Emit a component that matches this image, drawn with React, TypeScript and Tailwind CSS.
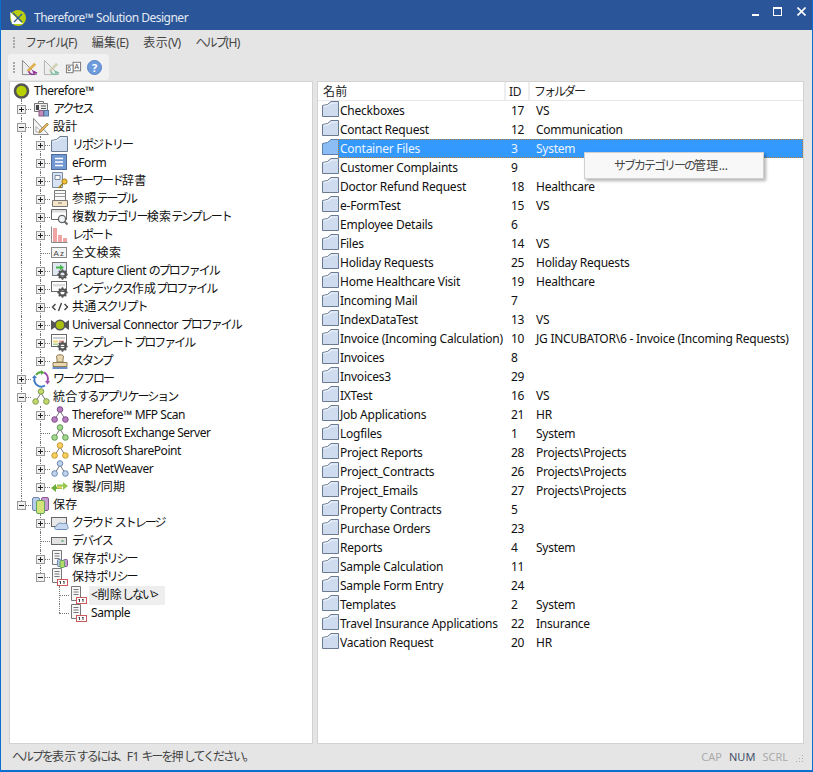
import React from "react";

const FONT = '"Noto Sans", "Noto Sans CJK JP", sans-serif';

/* Splits a label into kana, kanji and latin runs: the reference face has narrow kana. */
const T = ({ s, lat = "tracking-[-0.45px]" }: { s: string; lat?: string }) => {
  const parts = s.match(/[\u3040-\u30ff、。]+|[\u4e00-\u9fff]+|[^\u3040-\u30ff、。\u4e00-\u9fff]+/g) || [];
  return (
    <>
      {parts.map((p, i) =>
        /^[\u3040-\u30ff、。]/.test(p) ? (
          <span key={i} className="tracking-[-2px]">{p}</span>
        ) : /^[\u4e00-\u9fff]/.test(p) ? (
          <span key={i} className="tracking-[0.3px]">{p}</span>
        ) : (
          <span key={i} className={lat}>{p}</span>
        )
      )}
    </>
  );
};

const Gear = ({ x = 10, y = 11 }: { x?: number; y?: number }) => (
  <g transform={`translate(${x} ${y})`}>
    <circle r="3.2" fill="none" stroke="#555" strokeWidth="2.2" />
    <path d="M0-5.2V-3.5M0 3.5V5.2M-5.2 0H-3.5M3.5 0H5.2M-3.7-3.7L-2.5-2.5M2.5 2.5L3.7 3.7M-3.7 3.7L-2.5 2.5M2.5-2.5L3.7-3.7" stroke="#555" strokeWidth="1.6" />
  </g>
);

const Net = ({ fill, stroke }: { fill: string; stroke: string }) => (
  <>
    <path d="M9 5L4 13M9 5L14 13" stroke="#777" fill="none" />
    <circle cx="9" cy="3.5" r="2.8" fill={fill} stroke={stroke} />
    <circle cx="3.6" cy="13.5" r="2.8" fill={fill} stroke={stroke} />
    <circle cx="14.4" cy="13.5" r="2.8" fill={fill} stroke={stroke} />
  </>
);

const Doc = () => (
  <path d="M1.5.5H10.5V14.5H1.5ZM3.5 3.5H8.5M3.5 6H8.5M3.5 8.5H8.5" fill="#f7f7f7" stroke="#777" />
);

const icons: Record<string, React.ReactNode> = {
  root: <circle cx="8.5" cy="9" r="6.5" fill="#b8cf00" stroke="#555" strokeWidth="2.6" />,
  access: (
    <>
      <path d="M2.5 3.5H15.5V11.5H2.5Z" fill="#eee" stroke="#777" />
      <path d="M6.5 1.5H11.5V3.5H6.5Z" fill="#fff" stroke="#777" />
      <rect x="4" y="5" width="3" height="5" fill="#444" />
      <path d="M9 6H14M9 8.5H14" stroke="#555" />
      <rect x="7" y="10.5" width="4.5" height="5.5" fill="#c58bb8" stroke="#8a5b80" />
      <rect x="12" y="10.5" width="4.5" height="5.5" fill="#7fa6d6" stroke="#5878a0" />
    </>
  ),
  design: (
    <>
      <path d="M1.5 .5V16.5H16.5Z" fill="#f4f4f4" stroke="#888" />
      <path d="M4 8.5V14H9.5Z" fill="#fff" stroke="#aaa" />
      <path d="M7.5 12.5L15 5L16.5 6.5L9 14L7 15Z" fill="#e2b35a" stroke="#8a6a2a" strokeWidth=".6" />
    </>
  ),
  folder: (
    <>
      <path d="M.5 4.5L5.5 3.5L9 .5H16.5V15.5H.5Z" fill="#cfdcef" stroke="#6a7a90" />
      <path d="M1.5 5L6 4L9.5 1.5H15.5V2.5H10L6.5 5L1.5 6Z" fill="#eef3fa" />
    </>
  ),
  eform: (
    <>
      <rect x=".5" y=".5" width="15" height="15" fill="#7298d2" stroke="#4e6c9c" />
      <path d="M4 4.5H12M4 8H12M4 11.5H12" stroke="#fff" strokeWidth="1.6" />
    </>
  ),
  keyword: (
    <>
      <path d="M1.5 .5H11.5V15.5H1.5Z" fill="#d7e3f3" stroke="#7b8aa0" />
      <path d="M4 3.5H9V7.5H4Z" fill="#fff" stroke="#7b8aa0" />
      <circle cx="13.5" cy="9.5" r="2.6" fill="#f0c040" stroke="#a67f14" />
      <path d="M12 11.5L7.5 16M9 14.5L10.5 16" stroke="#a67f14" strokeWidth="1.4" />
    </>
  ),
  table: (
    <>
      <path d="M3.5 .5H14.5V10.5H3.5Z" fill="#fafafa" stroke="#777" />
      <path d="M3.5 3.5H14.5M3.5 6.5H14.5" stroke="#999" />
      <path d="M1.5 10.5H16.5V16.5H1.5Z" fill="#f4e6c6" stroke="#777" />
      <path d="M7 13H11" stroke="#a98" strokeWidth="1.5" />
    </>
  ),
  search: (
    <>
      <path d="M.5 1.5H15.5V11.5H.5Z" fill="#fff" stroke="#666" />
      <path d="M1 2H15V4.5H1Z" fill="#ddd" />
      <circle cx="11" cy="11" r="3.6" fill="#f2f5f8" stroke="#666" strokeWidth="1.3" />
      <path d="M13.5 13.5L16.5 16.5" stroke="#666" strokeWidth="2" />
    </>
  ),
  report: (
    <>
      <path d="M.5 .5V16.5H16.5" fill="none" stroke="#888" />
      <rect x="2" y="2" width="4" height="14" fill="#f0a5a5" />
      <rect x="7" y="9" width="4" height="7" fill="#f0a5a5" />
      <rect x="12" y="12" width="4" height="4" fill="#f0a5a5" />
    </>
  ),
  fulltext: (
    <>
      <rect x=".5" y="3.5" width="15" height="10" fill="#f4f4f4" stroke="#888" />
      <text x="2.5" y="11.5" fontSize="8" fill="#444" fontFamily="Liberation Sans">A</text>
      <text x="9" y="11.5" fontSize="8" fill="#444" fontFamily="Liberation Sans">z</text>
    </>
  ),
  capture: (
    <>
      <rect x="1.5" y=".5" width="14" height="13" fill="#dfe8f3" stroke="#777" />
      <path d="M5 4.5H9V2.5L13 5.5L9 8.5V6.5H5Z" fill="#47b54b" />
      <Gear x={11.5} y={12.5} />
    </>
  ),
  index: (
    <>
      <rect x=".5" y="1.5" width="15" height="10" fill="#fff" stroke="#666" />
      <path d="M2 4H14V6.5H2Z" fill="#ddd" />
      <Gear x={11.5} y={12.5} />
    </>
  ),
  script: <path d="M4.5 6L1.5 9L4.5 12M13.5 6L16.5 9L13.5 12M10.5 5L7.5 13" fill="none" stroke="#444" strokeWidth="1.4" />,
  universal: (
    <>
      <path d="M0 4L6 8V10L0 14ZM18 4L12 8V10L18 14Z" fill="#555" />
      <circle cx="9" cy="9" r="4.8" fill="#a9bf10" stroke="#555" strokeWidth="1.6" />
    </>
  ),
  template: (
    <>
      <rect x=".5" y=".5" width="15" height="12" fill="#fff" stroke="#666" />
      <path d="M2 3H14V5H2Z" fill="#ccc" />
      <path d="M2 6.5H7V8.5H2Z" fill="#f3d36a" />
      <path d="M8 6.5H13V8.5H8Z" fill="#ec9b8e" />
      <path d="M2 9.5H7V11H2Z" fill="#a8d08d" />
      <Gear x={11.5} y={12.5} />
    </>
  ),
  stamp: (
    <>
      <path d="M6 10C6 7 6 6.5 5.5 5C4.5 2 13.5 2 12.5 5C12 6.5 12 7 12 10Z" fill="#e8d7b0" stroke="#8c7a52" />
      <path d="M2 10.5H16V14.5H2Z" fill="#e8d7b0" stroke="#8c7a52" />
      <path d="M1.5 16H16.5" stroke="#6a8ec4" strokeWidth="2" />
    </>
  ),
  workflow: (
    <g fill="none" strokeWidth="2">
      <path d="M4 5A7 7 0 0 1 10 2" stroke="#5aa843" />
      <path d="M12 2.5A7 7 0 0 1 15.5 11" stroke="#9b4fa8" />
      <path d="M13 15.5A7 7 0 0 1 2.5 8" stroke="#3f78c4" />
      <path d="M9 0L12.5 2.5L9 5Z" fill="#5aa843" stroke="none" />
      <path d="M13 11H18L15.5 14.5Z" fill="#9b4fa8" stroke="none" />
      <path d="M0 8H5L2.5 5Z" fill="#3f78c4" stroke="none" />
    </g>
  ),
  netLime: <Net fill="#c4d86a" stroke="#7a9a50" />,
  netPurple: <Net fill="#b87cc0" stroke="#7a4a88" />,
  netGreen: <Net fill="#a8d890" stroke="#5a9a50" />,
  netYellow: <Net fill="#f8d060" stroke="#c49a30" />,
  netBlue: <Net fill="#c0d4ee" stroke="#6a88b0" />,
  sync: (
    <>
      <path d="M0 10L5 6V8.5H11V11H5V14Z" fill="#6cae3a" />
      <path d="M17 8L12 4V6.5H6V8.5H12V12Z" fill="#96c94e" />
      <path d="M6 8.5H11V10.5H6Z" fill="#e8d060" />
    </>
  ),
  storage: (
    <>
      <rect x=".5" y="1.5" width="7" height="13" rx="1.5" fill="#b8cbe8" stroke="#6f86ad" />
      <rect x="9.5" y="1.5" width="7" height="13" rx="1.5" fill="#c89ad2" stroke="#875a92" />
      <rect x="4.5" y="4.5" width="8" height="13" rx="1.5" fill="#d3e37a" stroke="#5ea55e" />
    </>
  ),
  cloud: (
    <>
      <rect x=".5" y="3.5" width="15" height="9" fill="#e8e8e8" stroke="#666" />
      <path d="M5.5 15.5C3 15.5 3 12.5 5.5 12C6 9.5 10 8 12 10C13 8.5 17 9.5 16.5 12C17.5 13 17.5 15.5 15 15.5Z" fill="#c5d8f0" stroke="#6f8cb5" />
    </>
  ),
  device: (
    <>
      <rect x=".5" y="5.5" width="15" height="7" fill="#e2e2e2" stroke="#666" />
      <path d="M10.5 9H12.5" stroke="#4aa866" strokeWidth="1.5" />
    </>
  ),
  savePolicy: (
    <>
      <Doc />
      <rect x="6.5" y="9.5" width="4" height="7" rx="1" fill="#b8cbe8" stroke="#6f86ad" />
      <rect x="12.5" y="9.5" width="4" height="7" rx="1" fill="#c89ad2" stroke="#875a92" />
      <rect x="9" y="10.5" width="4.5" height="7" rx="1" fill="#b4d86a" stroke="#5ea55e" />
    </>
  ),
  retention: (
    <>
      <Doc />
      <rect x="6.5" y="11.5" width="10" height="6" fill="#fff" stroke="#cc5a5a" />
      <path d="M9.5 13.5V16M13 13.5V16" stroke="#444" />
      <path d="M8.5 13.5H10M12 13.5H13.5" stroke="#444" />
    </>
  ),
};

const Icon = ({ name, tint }: { name: string; tint?: boolean }) => (
  <svg width="18" height="18" viewBox="0 0 18 18" className="shrink-0 overflow-visible">
    {tint ? <path d="M.5 4.5L5.5 3.5L9 .5H16.5V15.5H.5Z" fill="#8dbdf5" stroke="#5a7fae" /> : icons[name]}
  </svg>
);

type Node = { l: number; t: string; i: string; e?: "+" | "-"; sel?: boolean };

const tree: Node[] = [
  { l: 0, t: "Therefore™", i: "root" },
  { l: 1, t: "アクセス", i: "access", e: "+" },
  { l: 1, t: "設計", i: "design", e: "-" },
  { l: 2, t: "リポジトリー", i: "folder", e: "+" },
  { l: 2, t: "eForm", i: "eform", e: "+" },
  { l: 2, t: "キーワード辞書", i: "keyword", e: "+" },
  { l: 2, t: "参照テーブル", i: "table", e: "+" },
  { l: 2, t: "複数カテゴリー検索テンプレート", i: "search", e: "+" },
  { l: 2, t: "レポート", i: "report", e: "+" },
  { l: 2, t: "全文検索", i: "fulltext" },
  { l: 2, t: "Capture Client のプロファイル", i: "capture", e: "+" },
  { l: 2, t: "インデックス作成プロファイル", i: "index", e: "+" },
  { l: 2, t: "共通スクリプト", i: "script", e: "+" },
  { l: 2, t: "Universal Connector プロファイル", i: "universal", e: "+" },
  { l: 2, t: "テンプレート プロファイル", i: "template", e: "+" },
  { l: 2, t: "スタンプ", i: "stamp", e: "+" },
  { l: 1, t: "ワークフロー", i: "workflow", e: "+" },
  { l: 1, t: "統合するアプリケーション", i: "netLime", e: "-" },
  { l: 2, t: "Therefore™ MFP Scan", i: "netPurple", e: "+" },
  { l: 2, t: "Microsoft Exchange Server", i: "netGreen" },
  { l: 2, t: "Microsoft SharePoint", i: "netYellow", e: "+" },
  { l: 2, t: "SAP NetWeaver", i: "netBlue", e: "+" },
  { l: 2, t: "複製/同期", i: "sync", e: "+" },
  { l: 1, t: "保存", i: "storage", e: "-" },
  { l: 2, t: "クラウド ストレージ", i: "cloud", e: "+" },
  { l: 2, t: "デバイス", i: "device" },
  { l: 2, t: "保存ポリシー", i: "savePolicy", e: "+" },
  { l: 2, t: "保持ポリシー", i: "retention", e: "-" },
  { l: 3, t: "<削除しない>", i: "retention", sel: true },
  { l: 3, t: "Sample", i: "retention" },
];

const rows: [string, string, string][] = [
  ["Checkboxes", "17", "VS"],
  ["Contact Request", "12", "Communication"],
  ["Container Files", "3", "System"],
  ["Customer Complaints", "9", ""],
  ["Doctor Refund Request", "18", "Healthcare"],
  ["e-FormTest", "15", "VS"],
  ["Employee Details", "6", ""],
  ["Files", "14", "VS"],
  ["Holiday Requests", "25", "Holiday Requests"],
  ["Home Healthcare Visit", "19", "Healthcare"],
  ["Incoming Mail", "7", ""],
  ["IndexDataTest", "13", "VS"],
  ["Invoice (Incoming Calculation)", "10", "JG INCUBATOR\\6 - Invoice (Incoming Requests)"],
  ["Invoices", "8", ""],
  ["Invoices3", "29", ""],
  ["IXTest", "16", "VS"],
  ["Job Applications", "21", "HR"],
  ["Logfiles", "1", "System"],
  ["Project Reports", "28", "Projects\\Projects"],
  ["Project_Contracts", "26", "Projects\\Projects"],
  ["Project_Emails", "27", "Projects\\Projects"],
  ["Property Contracts", "5", ""],
  ["Purchase Orders", "23", ""],
  ["Reports", "4", "System"],
  ["Sample Calculation", "11", ""],
  ["Sample Form Entry", "24", ""],
  ["Templates", "2", "System"],
  ["Travel Insurance Applications", "22", "Insurance"],
  ["Vacation Request", "20", "HR"],
];

const PAD = ["pl-[3px]", "pl-[22px]", "pl-[41px]", "pl-[60px]"];
const VLINE: Record<number, string> = { 1: "left-[11px]", 2: "left-[30px]", 3: "left-[49px]" };
const EXP: Record<number, string> = { 1: "left-[7px]", 2: "left-[26px]" };
const HLINE: Record<number, string> = { 1: "left-[11px] w-[10px]", 2: "left-[30px] w-[10px]", 3: "left-[49px] w-[10px]" };

function hasLaterSibling(i: number, depth: number) {
  for (let j = i + 1; j < tree.length; j++) {
    if (tree[j].l < depth) return false;
    if (tree[j].l === depth) return true;
  }
  return false;
}

const Grip = () => (
  <div className="flex flex-col gap-[1px] mx-[3px]">
    {[0, 1, 2, 3].map((n) => (
      <div key={n} className="w-[2px] h-[2px] bg-[#a8a8a8]" />
    ))}
  </div>
);

const TreeRow = ({ n, i }: { n: Node; i: number }) => {
  const guides: React.ReactNode[] = [];
  for (let d = 1; d <= n.l; d++) {
    const later = hasLaterSibling(i, d);
    if (d === n.l) {
      guides.push(
        <div key={d} className={`absolute top-0 border-l border-dotted border-[#777] ${VLINE[d]} ${later ? "h-[18px]" : "h-[9px]"}`} />
      );
      guides.push(<div key={"h" + d} className={`absolute top-[9px] border-t border-dotted border-[#777] ${HLINE[d]}`} />);
    } else if (later) {
      guides.push(<div key={d} className={`absolute top-0 h-[18px] border-l border-dotted border-[#777] ${VLINE[d]}`} />);
    }
  }
  if (n.l === 0) guides.push(<div key="r" className="absolute top-[14px] h-[4px] left-[11px] border-l border-dotted border-[#777]" />);
  return (
    <div className={`relative h-[18px] flex items-center ${PAD[n.l]}`}>
      {guides}
      {n.e && (
        <div className={`absolute top-[5px] w-[9px] h-[9px] border border-[#999] bg-[#f0f0f0] flex items-center justify-center ${EXP[n.l]}`}>
          <div className="relative w-[5px] h-[1px] bg-[#222]">
            {n.e === "+" && <div className="absolute left-[2px] top-[-2px] w-[1px] h-[5px] bg-[#222]" />}
          </div>
        </div>
      )}
      <div className="relative w-[21px] shrink-0">
        <Icon name={n.i} />
      </div>
      <span
        className={`relative whitespace-nowrap text-[12px] leading-[18px] text-[#111] ${
          n.sel ? "bg-[#eeeeee] -ml-[2px] pl-[2px] pr-[7px] h-[19px]" : ""
        }`}
      >
        <T s={n.t} />
      </span>
    </div>
  );
};

export default function App() {
  return (
    <div
      className="w-[813px] h-[772px] flex flex-col bg-[#e5e5e5] border-x border-b-2 border-[#0a6fd0] overflow-hidden"
      style={{ fontFamily: FONT }}
    >
      {/* title bar */}
      <div className="h-[30px] shrink-0 bg-[#2a5699] flex items-center pl-[9px] pr-[5px] pt-[6px] text-[#e4eaf3]">
        <svg width="16" height="16" viewBox="0 0 16 16" className="shrink-0">
          <circle cx="8" cy="8" r="8" fill="#b9cf10" />
          <path d="M0 2L13 14H2Z" fill="#fff" />
          <path d="M3 3L12 12M12 4L4 12" stroke="#2a5699" strokeWidth="1.2" />
        </svg>
        <span className="ml-[8px] text-[12px] tracking-[-0.5px]">Therefore™ Solution Designer</span>
        <div className="ml-auto flex items-center gap-[13px] -mt-[14px]">
          <div className="w-[7px] h-[2px] bg-white mt-[7px] mr-[1px]" />
          <div className="w-[9px] h-[9px] border border-white border-t-2" />
          <svg width="9" height="9" viewBox="0 0 9 9" className="mr-[1px] ml-[2px]">
            <path d="M.5.5L8.5 8.5M8.5.5L.5 8.5" stroke="#fff" strokeWidth="1.6" />
          </svg>
        </div>
      </div>

      {/* menu */}
      <div className="h-[24px] shrink-0 flex items-center pl-[9px] pt-[1px] text-[12px] text-[#444]">
        <Grip />
        <div className="ml-[7px] flex gap-[15px]">
          {["ファイル(F)", "編集(E)", "表示(V)", "ヘルプ(H)"].map((m) => (
            <span key={m}>
              <T s={m} lat="tracking-[-0.6px] text-[12px]" />
            </span>
          ))}
        </div>
      </div>

      {/* toolbar */}
      <div className="h-[27px] shrink-0 pl-[7px] flex">
        <div className="w-[101px] h-[26px] bg-[#f1f1f1] rounded-[3px] flex items-center pl-[2px]">
          <Grip />
          <div className="ml-[3px] flex items-center gap-[5px]">
            <svg width="17" height="17" viewBox="0 0 18 18">
              <path d="M1.5 1.5V16.5H16.5Z" fill="#ececec" stroke="#888" />
              <path d="M6 12L14 4L16 6L8 14Z" fill="#e0b050" />
              <path d="M8 13A5 5 0 0 0 14 16L13 13L17 15" fill="none" stroke="#93309a" strokeWidth="1.5" />
            </svg>
            <svg width="17" height="17" viewBox="0 0 18 18">
              <path d="M1.5 1.5V16.5H16.5Z" fill="#eee" stroke="#b0b0b0" />
              <path d="M6 12L14 4L16 6L8 14Z" fill="#d2d2b8" />
              <path d="M8 13A5 5 0 0 0 14 16L13 13L17 15" fill="none" stroke="#7cc0a0" strokeWidth="1.5" />
            </svg>
            <svg width="17" height="17" viewBox="0 0 18 18">
              <rect x="8.5" y="3.5" width="8" height="9" fill="#f8f8f8" stroke="#777" />
              <rect x="1.5" y="6.5" width="7" height="8" fill="#fff" stroke="#777" />
              <text x="2.5" y="13" fontSize="7" fill="#444" fontFamily="Liberation Sans">6</text>
              <text x="10" y="10.5" fontSize="7" fill="#444" fontFamily="Liberation Sans">A</text>
            </svg>
            <div className="w-[15px] h-[15px] rounded-full bg-[#6d9bdc] border border-[#5a86c6] flex items-center justify-center text-white text-[11px] font-bold leading-none">
              ?
            </div>
          </div>
        </div>
      </div>

      {/* panes */}
      <div className="flex-1 min-h-0 flex pl-[8px] pr-[8px] gap-[4px]">
        <div className="w-[304px] border border-[#d2d2d2] bg-white overflow-hidden">
          {tree.map((n, i) => (
            <TreeRow key={i} n={n} i={i} />
          ))}
        </div>
        <div className="relative flex-1 border border-[#d2d2d2] bg-white overflow-hidden">
          <div className="h-[19px] flex text-[12px] text-[#222] leading-[19px] pl-[2px] bg-white border-b border-[#e8e8e8]">
            <div className="w-[186px] pl-[3px] border-r-2 border-[#eeeeee]"><T s="名前" /></div>
            <div className="w-[24px] pl-[3px] border-r-2 border-[#eeeeee]"><T s="ID" lat="tracking-[-0.24px]" /></div>
            <div className="flex-1 pl-[4px]"><T s="フォルダー" /></div>
          </div>
          {rows.map((r, i) => {
            const sel = i === 2;
            return (
              <div key={i} className="h-[19px] flex items-center pl-[4px] text-[12px] tracking-[-0.24px]">
                <div className="w-[16px] shrink-0 -mt-[1px]">
                  <Icon name="folder" tint={sel} />
                </div>
                <div
                  className={`flex-1 h-[19px] flex items-center leading-[19px] whitespace-nowrap ${
                    sel ? "bg-[#3399ff] text-[#eaf4ff] border border-dotted border-[#b87a30]" : "text-[#111] border border-transparent"
                  }`}
                >
                  <div className="w-[172px] pl-[1px]">{r[0]}</div>
                  <div className="w-[25px]">{r[1]}</div>
                  <div className="flex-1">{r[2]}</div>
                </div>
              </div>
            );
          })}
          <div className="absolute left-[266px] top-[70px] w-[180px] h-[27px] bg-[#f8f8f8] border border-[#d0d0d0] shadow-[2px_2px_3px_rgba(0,0,0,0.3)] flex items-center pl-[29px] text-[12px] text-[#444]">
            <span><T s="サブカテゴリーの管理..." lat="tracking-[-0.2px]" /></span>
          </div>
        </div>
      </div>

      {/* status bar */}
      <div className="h-[26px] shrink-0 flex items-center pl-[11px] pr-[8px] text-[11px] text-[#444]">
        <span className="text-[12px]"><T s="ヘルプを表示するには、F1 キーを押してください。" /></span>
        <div className="ml-auto flex items-center gap-[7px] mr-[7px]">
          <span className="text-[#aaaaaa]">CAP</span>
          <span className="text-[#44506a]">NUM</span>
          <span className="text-[#aaaaaa]">SCRL</span>
        </div>
        <svg width="9" height="9" viewBox="0 0 9 9" className="mt-[3px]">
          <path d="M7 1h1v1H7zM4 4h1v1H4zM7 4h1v1H7zM1 7h1v1H1zM4 7h1v1H4zM7 7h1v1H7z" fill="#aaa" />
        </svg>
      </div>
    </div>
  );
}
